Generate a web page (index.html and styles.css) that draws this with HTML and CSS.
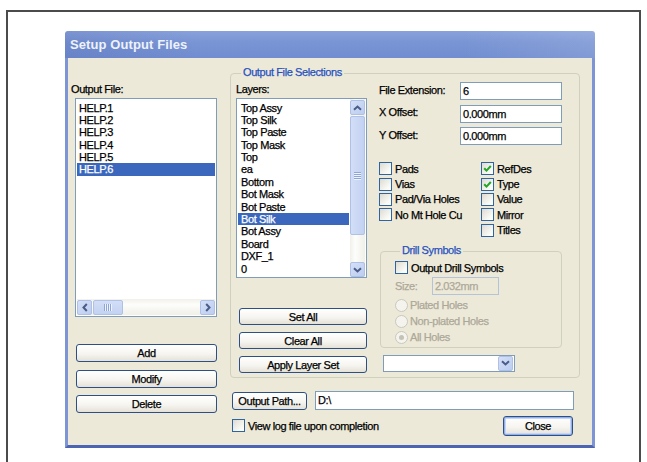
FILE: index.html
```html
<!DOCTYPE html>
<html>
<head>
<meta charset="utf-8">
<title>Setup Output Files</title>
<link rel="stylesheet" href="styles.css">
</head>
<body>
<div class="sheet">
  <div class="dialog">
    <div class="titlebar">Setup Output Files</div>
    <div class="client">

      <!-- output file list and its buttons -->
      <div class="files">
        <div class="label lbl-files">Output File:</div>
        <div class="listbox files-list">
          <div class="items">
            <div class="item">HELP.1</div>
            <div class="item">HELP.2</div>
            <div class="item">HELP.3</div>
            <div class="item">HELP.4</div>
            <div class="item">HELP.5</div>
            <div class="item selected">HELP.6</div>
          </div>
          <div class="hscroll">
            <span class="sbtn"><svg width="6" height="9" viewBox="0 0 6 9"><path d="M4.8 1 L1.5 4.5 L4.8 8" fill="none" stroke="#4a5d86" stroke-width="2"/></svg></span>
            <span class="hthumb"><span class="grip-h"></span></span>
            <span class="htrack"></span>
            <span class="sbtn"><svg width="6" height="9" viewBox="0 0 6 9"><path d="M1.2 1 L4.5 4.5 L1.2 8" fill="none" stroke="#4a5d86" stroke-width="2"/></svg></span>
          </div>
        </div>
        <div class="file-buttons">
          <div class="btn">Add</div>
          <div class="btn">Modify</div>
          <div class="btn">Delete</div>
        </div>
      </div>

      <div class="main">
        <div class="group selections">
          <div class="legend">Output File Selections</div>
          <div class="sel-grid">

            <div class="layers">
              <div class="label">Layers:</div>
              <div class="listbox layer-list">
                <div class="items">
                  <div class="item">Top Assy</div>
                  <div class="item">Top Silk</div>
                  <div class="item">Top Paste</div>
                  <div class="item">Top Mask</div>
                  <div class="item">Top</div>
                  <div class="item">ea</div>
                  <div class="item">Bottom</div>
                  <div class="item">Bot Mask</div>
                  <div class="item">Bot Paste</div>
                  <div class="item selected">Bot Silk</div>
                  <div class="item">Bot Assy</div>
                  <div class="item">Board</div>
                  <div class="item">DXF_1</div>
                  <div class="item">0</div>
                </div>
                <div class="vscroll">
                  <span class="sbtn"><svg width="9" height="6" viewBox="0 0 9 6"><path d="M1 4.8 L4.5 1.5 L8 4.8" fill="none" stroke="#4a5d86" stroke-width="2"/></svg></span>
                  <span class="vthumb"><span class="grip-v"></span></span>
                  <span class="vtrack"></span>
                  <span class="sbtn"><svg width="9" height="6" viewBox="0 0 9 6"><path d="M1 1.2 L4.5 4.5 L8 1.2" fill="none" stroke="#4a5d86" stroke-width="2"/></svg></span>
                </div>
              </div>
              <div class="layer-buttons">
                <div class="btn">Set All</div>
                <div class="btn">Clear All</div>
                <div class="btn">Apply Layer Set</div>
              </div>
            </div>

            <div class="options">
              <div class="fields">
                <span class="flabel">File Extension:</span><div class="edit">6</div>
                <span class="flabel">X Offset:</span><div class="edit">0.000mm</div>
                <span class="flabel">Y Offset:</span><div class="edit">0.000mm</div>
              </div>

              <div class="checks">
                <div class="check-col">
                  <div class="check"><span class="cb"></span>Pads</div>
                  <div class="check"><span class="cb"></span>Vias</div>
                  <div class="check"><span class="cb"></span>Pad/Via Holes</div>
                  <div class="check"><span class="cb"></span>No Mt Hole Cu</div>
                </div>
                <div class="check-col">
                  <div class="check"><span class="cb"><svg width="11" height="11" viewBox="0 0 11 11"><path d="M2.2 5.2 L4.5 7.6 L8.8 3" fill="none" stroke="#22a526" stroke-width="2"/></svg></span>RefDes</div>
                  <div class="check"><span class="cb"><svg width="11" height="11" viewBox="0 0 11 11"><path d="M2.2 5.2 L4.5 7.6 L8.8 3" fill="none" stroke="#22a526" stroke-width="2"/></svg></span>Type</div>
                  <div class="check"><span class="cb"></span>Value</div>
                  <div class="check"><span class="cb"></span>Mirror</div>
                  <div class="check"><span class="cb"></span>Titles</div>
                </div>
              </div>

              <div class="group drill">
                <div class="legend">Drill Symbols</div>
                <div class="check drill-check"><span class="cb"></span>Output Drill Symbols</div>
                <div class="size-row">
                  <span class="size-label">Size:</span>
                  <div class="edit disabled">2.032mm</div>
                </div>
                <div class="radios">
                  <div class="radio"><span class="rb"></span>Plated Holes</div>
                  <div class="radio"><span class="rb"></span>Non-plated Holes</div>
                  <div class="radio"><span class="rb on"></span>All Holes</div>
                </div>
              </div>

              <div class="combo">
                <span class="combo-btn"><svg width="9" height="6" viewBox="0 0 9 6"><path d="M1 1.2 L4.5 4.5 L8 1.2" fill="none" stroke="#4a5d86" stroke-width="2"/></svg></span>
              </div>
            </div>

          </div>
        </div>

        <div class="path-row">
          <div class="btn path-btn">Output Path...</div>
          <div class="edit path-edit">D:\</div>
        </div>

        <div class="foot-row">
          <div class="check"><span class="cb"></span>View log file upon completion</div>
          <div class="btn close-btn">Close</div>
        </div>
      </div>

    </div>
  </div>
</div>
</body>
</html>
```

FILE: styles.css
```css
* {
  box-sizing: border-box;
}

body {
  margin: 0;
  background: #fff;
  font-family: "Liberation Sans", Arial, sans-serif;
  font-size: 11px;
  letter-spacing: -0.4px;
  color: #000;
}

/* page frame around the figure */
.sheet {
  margin: 10px 0 0 6px;
  width: 635px;
  height: 452px;
  border: 2px solid #4b4b4b;
  border-bottom: 0;
  padding: 19px 0 0 57px;
}

.dialog {
  width: 530px;
  height: 417px;
  display: flex;
  flex-direction: column;
}

.titlebar {
  flex: none;
  height: 27px;
  padding-left: 5px;
  line-height: 28px;
  font-size: 13px;
  font-weight: bold;
  letter-spacing: 0.1px;
  color: #eef2fb;
  border-radius: 3px 3px 0 0;
  background:
    linear-gradient(to right, rgba(30, 50, 130, 0.12), rgba(0, 0, 0, 0) 25%, rgba(255, 255, 255, 0) 75%, rgba(255, 255, 255, 0.12)),
    linear-gradient(#89a2dc, #7a95d4 40%, #718dd0);
}

.client {
  flex: 1;
  background: #ece9d8;
  border: 3px solid #7d95d4;
  border-top: 0;
  border-bottom-color: #4d64b3;
  display: grid;
  grid-template-columns: 142px 350px;
  column-gap: 13px;
  align-items: start;
  padding: 15px 0 0 7px;
  -webkit-text-stroke: 0.25px currentColor;
}

.label {
  height: 13px;
  line-height: 13px;
}

/* ---------- output file column ---------- */
.files {
  padding-top: 10px;
}

.lbl-files {
  margin: 0 0 2px -4px;
}

.listbox {
  background: #fff;
  border: 1px solid #7f9db9;
}

.items {
  flex: 1;
  padding-top: 2.5px;
  overflow: hidden;
}

.item {
  height: 12.4px;
  line-height: 12.4px;
  padding-left: 2px;
  white-space: nowrap;
}

.item.selected {
  background: #3b68bc;
  color: #fff;
}

.files-list {
  height: 219px;
  display: flex;
  flex-direction: column;
  padding: 0 1px 1px;
}

.hscroll {
  flex: none;
  height: 16px;
  display: flex;
  align-items: center;
  gap: 1px;
  background: linear-gradient(#f1f0ea, #fdfdfb 35%, #f0efe8);
}

.sbtn {
  flex: none;
  width: 15px;
  height: 15px;
  display: grid;
  place-items: center;
  background: linear-gradient(135deg, #d5e0f7, #bccdf0);
  border: 1px solid #aec0e6;
  border-radius: 2px;
}

.hthumb {
  flex: none;
  width: 30px;
  height: 15px;
  display: grid;
  place-items: center;
  background: linear-gradient(#d3def6, #c2d2f2);
  border: 1px solid #afc1e7;
  border-radius: 2px;
}

.htrack {
  flex: 1;
}

.grip-h {
  width: 8px;
  height: 7px;
  background: repeating-linear-gradient(to right, #8ea6d8 0 1px, #eef3fd 1px 2px);
}

.file-buttons {
  margin: 27px 0 0 1px;
  display: flex;
  flex-direction: column;
  gap: 7.5px;
}

.file-buttons .btn {
  height: 18px;
}

/* ---------- buttons ---------- */
.btn {
  display: flex;
  align-items: center;
  justify-content: center;
  border: 1px solid #2d4f84;
  border-radius: 3px;
  background: linear-gradient(#ffffff, #f6f5f0 55%, #e4e1d7);
  white-space: nowrap;
}

/* ---------- group boxes ---------- */
.group {
  border: 1px solid #d0d0bf;
  border-radius: 4px;
}

.legend {
  width: max-content;
  height: 13px;
  line-height: 13px;
  margin: -8px 0 0 5px;
  padding: 0 2px;
  background: #ece9d8;
  color: #2651c0;
}

.main {
  display: flex;
  flex-direction: column;
}

.selections {
  height: 305px;
  padding: 0 17px 0 5px;
}

.sel-grid {
  display: grid;
  grid-template-columns: 131px 1fr;
  column-gap: 12px;
}

/* ---------- layers column ---------- */
.layers {
  padding-top: 4px;
}

.layers .label {
  margin-bottom: 2px;
}

.layer-list {
  height: 180px;
  display: flex;
  padding-left: 1px;
}

.layer-list .item {
  padding-left: 3px;
}

.vscroll {
  flex: none;
  width: 15px;
  margin: 0 1px 0 1px;
  display: flex;
  flex-direction: column;
  background: linear-gradient(to right, #f1f0ea, #fdfdfb 35%, #f0efe8);
}

.vscroll .sbtn:first-child {
  margin-top: 1px;
}

.vthumb {
  flex: none;
  height: 119px;
  margin-top: 1px;
  display: grid;
  place-items: center;
  background: linear-gradient(to right, #d3def6, #c2d2f2);
  border: 1px solid #afc1e7;
  border-radius: 2px;
}

.grip-v {
  width: 7px;
  height: 8px;
  background: repeating-linear-gradient(#8ea6d8 0 1px, #eef3fd 1px 2px);
}

.vtrack {
  flex: 1;
}

.layer-buttons {
  margin: 30px 0 0 3px;
  width: 128px;
  display: flex;
  flex-direction: column;
  gap: 7px;
}

.layer-buttons .btn {
  height: 17px;
}

/* ---------- options column ---------- */
.fields {
  margin-top: 3px;
  display: grid;
  grid-template-columns: 81px 102px;
  grid-auto-rows: 18px;
  row-gap: 4.5px;
  align-items: center;
}

.flabel {
  margin-top: -3px;
}

.edit {
  height: 18px;
  border: 1px solid #7f9db9;
  background: #fff;
  padding-left: 2px;
  line-height: 16px;
  white-space: nowrap;
}

.checks {
  margin-top: 16.2px;
  display: flex;
}

.check-col {
  width: 102px;
}

.check {
  height: 15.3px;
  display: flex;
  align-items: center;
  gap: 3px;
  white-space: nowrap;
}

.cb {
  flex: none;
  width: 13px;
  height: 13px;
  display: grid;
  place-items: center;
  border: 1px solid #2f649f;
  background: linear-gradient(135deg, #dcdad1, #f8f8f4 70%, #ffffff);
}

.drill {
  margin: 13px 0 0 1px;
  width: 182px;
  height: 97px;
  padding-left: 14px;
}

.drill-check {
  margin-top: 3.5px;
  height: 15px;
}

.size-row {
  margin-top: 2px;
  display: flex;
  align-items: center;
  color: #aca899;
}

.size-label {
  width: 37px;
}

.edit.disabled {
  width: 67px;
  background: #ece9d8;
  border-color: #b4c3d8;
  color: #aca899;
}

.radios {
  margin-top: 2px;
}

.radio {
  height: 16px;
  display: flex;
  align-items: center;
  gap: 2px;
  color: #aca899;
}

.rb {
  flex: none;
  width: 13px;
  height: 13px;
  border-radius: 50%;
  border: 1px solid #cac8bb;
  background: #f4f3ee;
  display: grid;
  place-items: center;
}

.rb.on::after {
  content: "";
  width: 5px;
  height: 5px;
  border-radius: 50%;
  background: #c4c2b4;
}

.combo {
  margin: 7px 0 0 4px;
  width: 132px;
  height: 17px;
  border: 1px solid #7f9db9;
  background: #fff;
  display: flex;
  justify-content: flex-end;
  align-items: center;
  padding-right: 1px;
}

.combo-btn {
  width: 15px;
  height: 15px;
  display: grid;
  place-items: center;
  background: linear-gradient(135deg, #d5e0f7, #bccdf0);
  border: 1px solid #aec0e6;
  border-radius: 2px;
}

/* ---------- bottom rows ---------- */
.path-row {
  margin-top: 13px;
  height: 19px;
  display: flex;
  align-items: center;
}

.path-btn {
  margin-left: 2px;
  width: 75px;
  height: 18px;
}

.path-edit {
  margin-left: 8px;
  width: 259px;
  height: 19px;
  line-height: 17px;
}

.foot-row {
  margin-top: 6px;
  height: 20px;
  display: flex;
  align-items: center;
}

.foot-row .check {
  margin-left: 2px;
}

.close-btn {
  margin: 0 7px 0 auto;
  width: 70px;
  height: 20px;
  box-shadow: inset 0 0 0 1px #8fb0ea, inset 0 0 0 2px #c6d6f6;
}
```
